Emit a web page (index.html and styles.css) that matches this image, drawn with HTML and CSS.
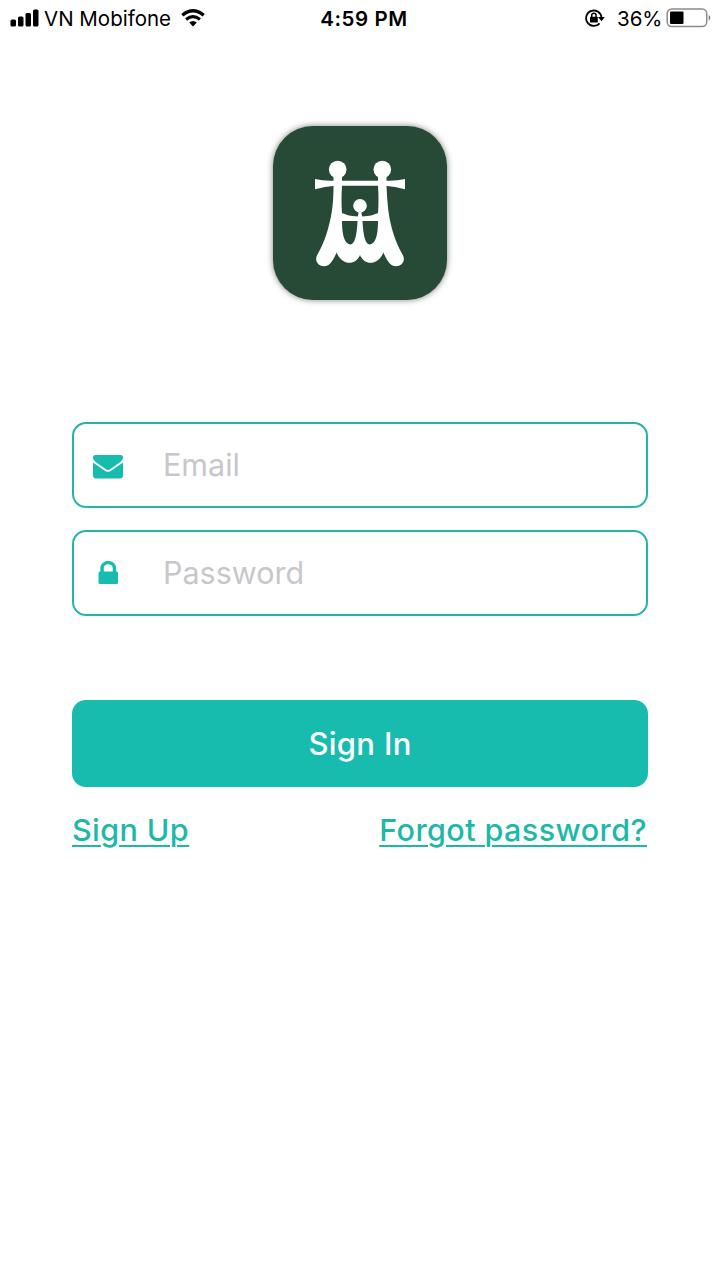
FILE: index.html
```html
<!DOCTYPE html>
<html lang="en">
<head>
<meta charset="utf-8">
<title>Sign In</title>
<link rel="stylesheet" href="styles.css">
</head>
<body>
<header class="status">
  <div class="carrier">
    <svg class="signal" width="29" height="18" viewBox="0 0 29 18"><rect x="0.5" y="10.5" width="5.5" height="7" rx="1.5"/><rect x="8" y="7.5" width="5.5" height="10" rx="1.5"/><rect x="15.5" y="4" width="5.5" height="13.5" rx="1.5"/><rect x="23" y="0.5" width="5.5" height="17" rx="1.5"/></svg>
    <span class="carrier-name">VN Mobifone</span>
    <svg class="wifi" width="26" height="18" viewBox="0 0 26 18"><path d="M2.3 6.200Q13-2.600 23.700 6.200" fill="none" stroke="#000" stroke-width="3.400"/><path d="M6.100 10.500Q13 4.800 19.900 10.500" fill="none" stroke="#000" stroke-width="3"/><path d="M9.200 13.600Q13 10.600 16.800 13.600L13 17.400z"/></svg>
  </div>
  <span class="time">4:59 PM</span>
  <div class="power">
    <svg class="rotation" width="20" height="18" viewBox="0 0 20 18"><path d="M14.600 14.300A7.700 7.700 0 1 1 16.500 8.700" fill="none" stroke="#000" stroke-width="1.800"/><path d="M13 8h6.800l-3.300 4.200z"/><rect x="5" y="7.800" width="7.800" height="5.800" rx=".7"/><path d="M6.700 8.300V6.500a2.200 2.200 0 0 1 4.400 0v1.800" fill="none" stroke="#000" stroke-width="1.500"/></svg>
    <span class="percent">36%</span>
    <svg class="battery" width="46" height="20" viewBox="0 0 46 20"><rect x="1.200" y="1" width="39.500" height="17.500" rx="4.500" fill="#fff" stroke="#8b8b8b" stroke-width="1.500"/><rect x="4" y="3.500" width="13.500" height="12.500" rx="1"/><path d="M42.700 6.700q3.200 3 0 6z" fill="#777"/></svg>
  </div>
</header>
<main class="login">
  <div class="logo">
    <svg width="110" height="125" viewBox="0 0 110 125" fill="#fff">
      <circle cx="32.700" cy="19.500" r="8.800"/><circle cx="77.300" cy="19.500" r="8.800"/><circle cx="55" cy="55.800" r="6.800"/>
      <path d="M10 29Q18 31 28 30.700H82Q92 31 100 29V39.200Q90 36.400 80 35.800H30Q20 36.400 10 39.200z"/>
      <path fill-rule="evenodd" d="M28.500 26H37V36Q36 50 37 63Q43 66 52.500 66.500Q54 65 53 61H57Q56 65 57.500 66.500Q67 66 73 63Q74 50 73 36V26H81.500V36Q82.500 63 86.500 77C89.500 89 93.500 97 98 105.500C101.500 113 93.500 119 86.500 115C82.500 112 80.500 107 78.300 102.500C74 114.500 60 117 55 105C50 117 36 114.500 31.700 102.500C29.500 107 27.500 112 23.500 115C16.500 119 8.500 113 12 105.500C16.500 97 20.500 89 23.500 77C27.500 63 28.500 50 28.500 36zM37 71Q37 94 45.500 94.500Q51.500 94 52.500 71zM73 71Q73 94 64.500 94.500Q58.500 94 57.500 71z"/>
    </svg>
  </div>
  <label class="field">
    <svg class="field-icon icon-mail" width="32" height="26" viewBox="0 0 32 26"><path d="M3.500 1h25Q31 1 31 3.500Q31 6.300 27 9L18.500 15Q16 16.800 13.500 15L5 9Q1 6.300 1 3.500Q1 1 3.500 1zM1 8.500L12.500 16.600Q16 19 19.500 16.600L31 8.500V21.500Q31 24.500 28 24.500H4Q1 24.500 1 21.500z"/></svg>
    <input class="input" type="email" placeholder="Email">
  </label>
  <label class="field">
    <svg class="field-icon" width="32" height="26" viewBox="0 0 32 26"><path fill-rule="evenodd" d="M8.300 11.500V8.500C8.300-1.500 24.200-1.500 24.200 8.500V11.500H24.700Q26 11.500 26 13V22.500Q26 24 24.500 24H8Q6.500 24 6.500 22.500V13Q6.500 11.500 8 11.500zM11.800 11.500H20.700V8C20.700 3 11.800 3 11.800 8z"/></svg>
    <input class="input" type="password" placeholder="Password">
  </label>
  <button class="signin" type="button">Sign In</button>
  <nav class="links"><a class="link link-up" href="#">Sign Up</a><a class="link link-forgot" href="#">Forgot password?</a></nav>
</main>
</body>
</html>
```

FILE: styles.css
```css
* { box-sizing: border-box; }
body { margin: 0; min-height: 1280px; background: #fff; font-family: Inter, "Liberation Sans", sans-serif; color: #000; }
svg { display: block; flex: none; }
.status { display: grid; grid-template-columns: 1fr auto 1fr; align-items: center; height: 36px; padding: 0 8px 0 10px; font-size: 20.5px; line-height: 36px; white-space: nowrap; }
.carrier, .power { display: flex; align-items: center; }
.signal { margin-top: -1px; }
.carrier-name { width: 127px; margin: 1px 0 0 5px; letter-spacing: 0; }
.wifi { margin: -1px 0 0 9px; }
.time { margin: 1px 0 0 6px; font-weight: 600; letter-spacing: 0.6px; }
.power { justify-content: flex-end; }
.rotation { margin-top: -2px; }
.percent { width: 44px; margin: 1px 5px 0 12px; letter-spacing: 0; }
.battery { margin-top: -1px; }
.login { display: flex; flex-direction: column; padding: 90px 72px 0; }
.logo { display: flex; align-items: flex-start; justify-content: center; align-self: center; width: 174px; height: 174px; margin-bottom: 122px; padding-top: 24px; border-radius: 40px; background: #264a35; box-shadow: 0 0 6px rgba(0, 0, 0, .5); }
.field { display: flex; align-items: center; height: 86px; margin-bottom: 22px; padding-left: 18px; border: 2px solid #24b5a9; border-radius: 14px; fill: #17bcaf; }
.icon-mail { margin-top: 3px; }
.input { flex: 1; min-width: 0; height: 80px; margin: 0 0 1px 39px; padding: 0; border: 0; outline: 0; background: transparent; font: 400 30.5px Inter, "Liberation Sans", sans-serif; }
.input::placeholder { color: #c7c7cb; opacity: 1; }
.signin { height: 87px; margin-top: 62px; padding: 0; border: 0; border-radius: 14px; background: #17bcaf; color: #fff; font: 500 31px Inter, "Liberation Sans", sans-serif; letter-spacing: 0.3px; }
.links { display: flex; justify-content: space-between; margin-top: 24px; padding-right: 1px; }
.link { color: #1eb8a8; font-size: 30.5px; font-weight: 500; line-height: 38px; letter-spacing: 0.42px; text-decoration-thickness: 2px; text-underline-offset: 4px; }
```
